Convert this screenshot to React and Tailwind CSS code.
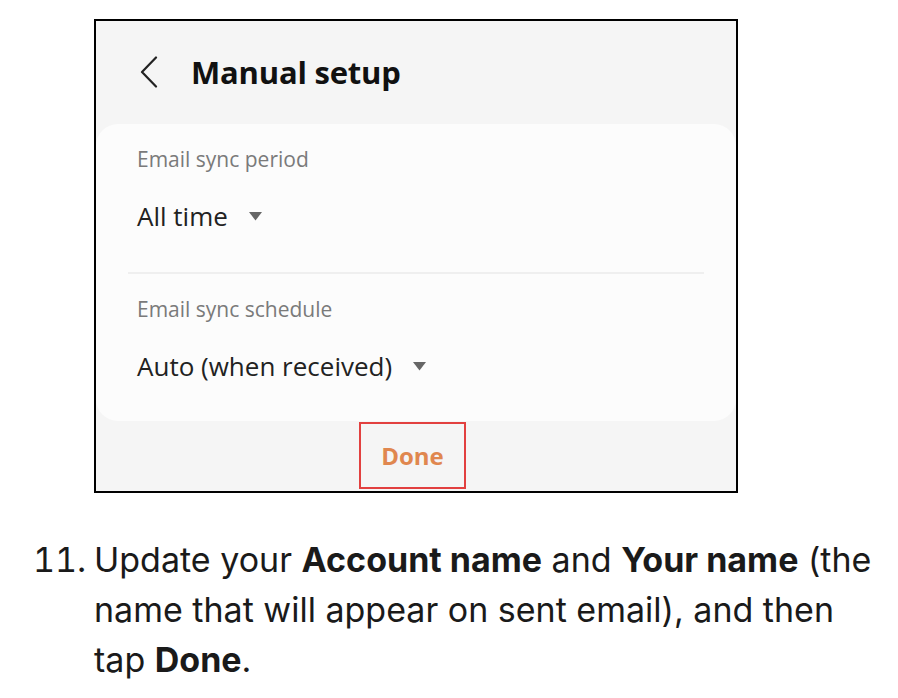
function Caret() {
  return (
    <svg width="15" height="10" viewBox="0 0 15 10" className="shrink-0">
      <path d="M1 1h13L7.5 9.5z" fill="#666" />
    </svg>
  );
}

function Row({ label, value }) {
  return (
    <div className="pl-[41px]">
      <div className="text-[21px] leading-[24px] text-[#7a7a7a]">{label}</div>
      <div className="mt-[30px] flex items-center gap-[20px]">
        <span className="text-[26px] leading-[30px] text-[#222]">{value}</span>
        <Caret />
      </div>
    </div>
  );
}

export default function App() {
  return (
    <div className="w-[898px] h-[698px] bg-white overflow-hidden font-['Open_Sans',sans-serif]">
      <div className="ml-[94px] mt-[19px] w-[644px] h-[474px] border-2 border-black bg-[#f5f5f5] flex flex-col">
        {/* Header */}
        <div className="h-[103px] flex items-center pl-[44px] pb-[2px]">
          <svg width="18" height="32" viewBox="0 0 18 32" className="shrink-0">
            <path d="M16 1.5L2 16l14 14.5" fill="none" stroke="#222" strokeWidth="2.2" strokeLinecap="round" strokeLinejoin="round" />
          </svg>
          <h1 className="ml-[33px] text-[31px] leading-[36px] font-bold text-[#111] tracking-[-0.2px]">Manual setup</h1>
        </div>

        {/* Card */}
        <div className="h-[297px] bg-[#fcfcfc] rounded-[22px] flex flex-col">
          <div className="pt-[23px] h-[148px]">
            <Row label="Email sync period" value="All time" />
          </div>
          <div className="mx-[32px] h-[2px] bg-[#efefef]" />
          <div className="pt-[23px]">
            <Row label="Email sync schedule" value="Auto (when received)" />
          </div>
        </div>

        {/* Done */}
        <div className="flex justify-center pr-[7px] pt-[1px]">
          <div className="w-[107px] h-[67px] border-2 border-[#e2403f] flex items-center justify-center">
            <span className="text-[24px] font-bold text-[#e0874f]">Done</span>
          </div>
        </div>
      </div>

      {/* Step text */}
      <ol className="mt-[42px] font-['Inter',sans-serif] text-[34px] leading-[50px] text-[#1a1a1a]">
        <li className="flex">
          <span className="w-[94px] pl-[33px] shrink-0 tabular-nums">11.</span>
          <span className="w-[792px]">
            Update your <b className="font-bold">Account name</b> and <b className="font-bold">Your name</b> (the name that will appear on sent email), and then tap <b className="font-bold">Done</b>.
          </span>
        </li>
      </ol>
    </div>
  );
}
